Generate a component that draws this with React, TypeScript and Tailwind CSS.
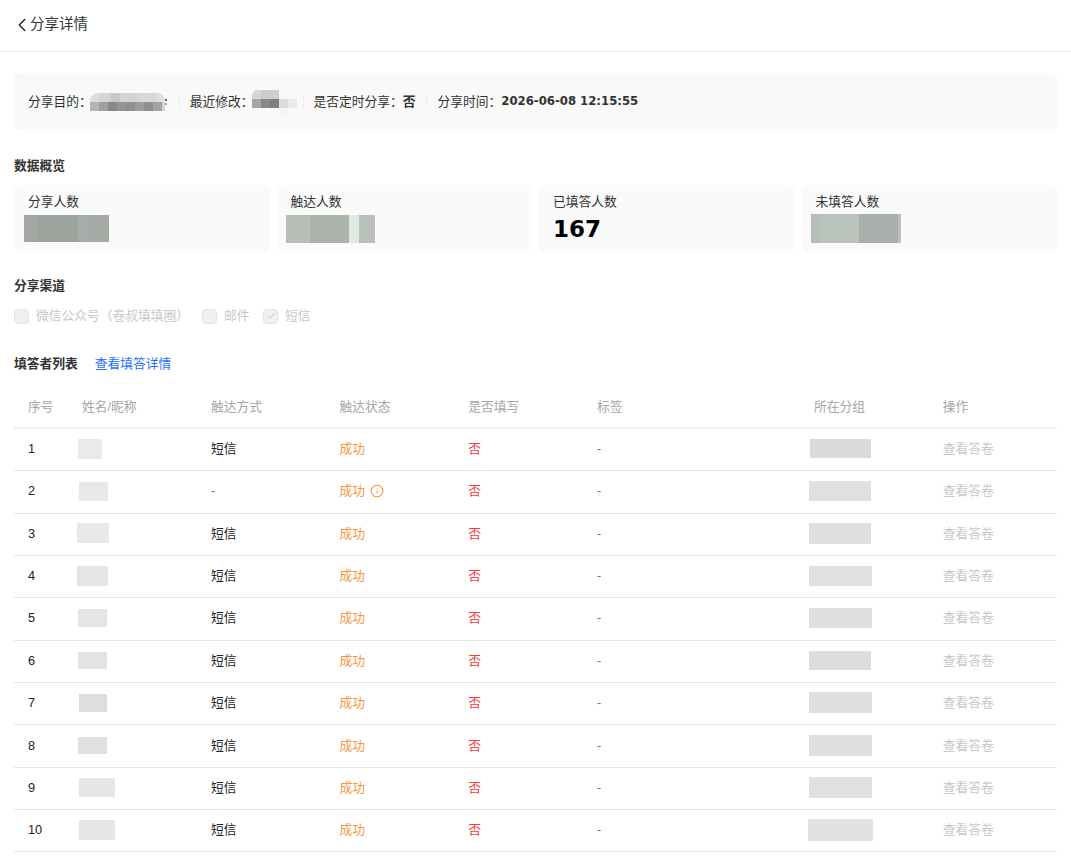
import { ChevronLeft, Check, Info } from "lucide-react";

const baseFont = "font-['Liberation_Sans','Noto_Sans_CJK_SC',sans-serif]";

type Row = {
  no: number;
  nameBlock: string;
  channel: string;
  groupBlock: string;
  info?: boolean;
};

const rows: Row[] = [
  { no: 1, nameBlock: "w-[24px] h-[20px] -ml-[4px] bg-[#eaeaea]", channel: "短信", groupBlock: "w-[61px] h-[19px] -ml-[4px] bg-[#dadada]" },
  { no: 2, nameBlock: "w-[29px] h-[19px] -ml-[3px] bg-[#e8e8e8]", channel: "-", groupBlock: "w-[62px] h-[20px] -ml-[5px] bg-[#dfe0df]", info: true },
  { no: 3, nameBlock: "w-[32px] h-[20px] -ml-[5px] bg-[#e8e9e8]", channel: "短信", groupBlock: "w-[62px] h-[21px] -ml-[5px] bg-[#dfdfdf]" },
  { no: 4, nameBlock: "w-[31px] h-[20px] -ml-[5px] bg-[#e5e5e5]", channel: "短信", groupBlock: "w-[63px] h-[20px] -ml-[5px] bg-[#e0e0de]" },
  { no: 5, nameBlock: "w-[29px] h-[18px] -ml-[4px] bg-[#e5e5e5]", channel: "短信", groupBlock: "w-[63px] h-[20px] -ml-[5px] bg-[#dfdfdf]" },
  { no: 6, nameBlock: "w-[29px] h-[17px] -ml-[4px] bg-[#e3e3e3]", channel: "短信", groupBlock: "w-[62px] h-[19px] -ml-[5px] bg-[#dddddd]" },
  { no: 7, nameBlock: "w-[28px] h-[18px] -ml-[3px] bg-[#dedede]", channel: "短信", groupBlock: "w-[63px] h-[21px] -ml-[5px] bg-[#dfdfdf]" },
  { no: 8, nameBlock: "w-[29px] h-[17px] -ml-[4px] bg-[#e0e0e0]", channel: "短信", groupBlock: "w-[63px] h-[21px] -ml-[5px] bg-[#dfdfdf]" },
  { no: 9, nameBlock: "w-[36px] h-[19px] -ml-[3px] bg-[#e6e6e6]", channel: "短信", groupBlock: "w-[63px] h-[21px] -ml-[5px] bg-[#e0e0e0]" },
  { no: 10, nameBlock: "w-[36px] h-[20px] -ml-[3px] bg-[#e6e6e6]", channel: "短信", groupBlock: "w-[65px] h-[22px] -ml-[6px] bg-[#e2e2e2]" },
];

function Mosaic({ cells, className }: { cells: string[]; className: string }) {
  return (
    <span className={`flex overflow-hidden ${className}`}>
      {cells.map((c, i) => (
        <span key={i} className={`h-full ${c}`} />
      ))}
    </span>
  );
}

function StatCard({ label, children }: { label: string; children: React.ReactNode }) {
  return (
    <div className="h-[67px] flex-1 rounded-[6px] bg-[#fafafa] pl-[14px] pt-[8px]">
      <div className="text-[12.75px] leading-[18px] text-[#333]">{label}</div>
      {children}
    </div>
  );
}

function Channel({ label, checked }: { label: string; checked?: boolean }) {
  return (
    <span className="flex items-center text-[#c8c8c8]">
      <span className="mr-[7px] flex h-[15px] w-[15px] items-center justify-center rounded-[4px] border border-[#e2e2e2] bg-[#f0f0f0]">
        {checked && <Check size={10} strokeWidth={1.6} className="text-[#aaa]" />}
      </span>
      {label}
    </span>
  );
}

const colClass = "grid grid-cols-[54px_129px_128.6px_128.6px_128.8px_217px_128.8px_1fr]";

export default function App() {
  return (
    <div className={`h-[856px] overflow-hidden bg-white text-[12.75px] text-[#333] ${baseFont}`}>
      <div className="flex h-[52px] items-center border-b border-[#ebebeb] pb-[1px] pl-[11px]">
        <ChevronLeft size={22} strokeWidth={1.5} className="text-[#222]" />
        <span className="-ml-[3px] text-[14.5px] text-[#333]">分享详情</span>
      </div>

      <div className="pl-[14px] pr-[14px]">
        <div className="mt-[21px] flex h-[58px] items-center rounded-[6px] bg-[#f9f9f9] pl-[14px]">
          <span>分享目的：</span>
          <span className="-ml-[2px] flex h-[18px] w-[78px] flex-col">
            <span className="flex">
              <Mosaic
                className="h-[9px] w-[75px] rounded-t-[8px]"
                cells={["w-[9px] bg-[#dcdcdc]", "w-[12px] bg-[#d5d5d5]", "w-[9px] bg-[#c6c7c8]", "w-[18px] bg-[#d4d4d4]", "w-[18px] bg-[#d8d8d8]", "w-[9px] bg-[#dedede]"]}
              />
              <span className="mt-[6px] h-[2px] w-[2px] bg-[#666]" />
            </span>
            <span className="flex">
              <Mosaic
                className="h-[9px] w-[75px]"
                cells={["w-[9px] bg-[#b4b4b2]", "w-[9px] bg-[#a0a09e]", "w-[9px] bg-[#87888b]", "w-[9px] bg-[#949492]", "w-[9px] bg-[#8f9093]", "w-[9px] bg-[#9d9d9e]", "w-[9px] bg-[#90908f]", "w-[9px] bg-[#a2a2a0]", "w-[3px] bg-[#d4d4d4]"]}
              />
              <span className="mt-[1px] h-[2px] w-[2px] bg-[#8fb0d0]" />
            </span>
          </span>
          <span className="ml-[11px] mr-[10px] h-[12px] w-px bg-[#ececec]" />
          <span>最近修改：</span>
          <span className="-ml-[2px] mt-[3px] flex h-[27px] w-[45px] flex-col">
            <Mosaic
              className="h-[9px] w-[27px] rounded-tl-[6px]"
              cells={["w-[9px] bg-[#d8d6d4]", "w-[9px] bg-[#cccccc]", "w-[9px] bg-[#cfcfcf]"]}
            />
            <Mosaic
              className="h-[9px] w-[45px]"
              cells={["w-[9px] bg-[#a9a5a2]", "w-[9px] bg-[#88888a]", "w-[9px] bg-[#7f8085]", "w-[9px] bg-[#dcdcdc]", "w-[9px] bg-[#e9ebeb]"]}
            />
            <span className="ml-[27px] h-[9px] w-[9px] bg-[#f4f4f4]" />
          </span>
          <span className="ml-[6px] mr-[10px] h-[12px] w-px bg-[#ececec]" />
          <span>是否定时分享：</span>
          <span className="font-bold">否</span>
          <span className="ml-[10px] mr-[11px] h-[12px] w-px bg-[#ececec]" />
          <span>分享时间：</span>
          <span className="font-['DejaVu_Sans',sans-serif] text-[11.7px] font-bold">2026-06-08 12:15:55</span>
        </div>

        <div className="mt-[26px] font-bold leading-[18px]">数据概览</div>
        <div className="mt-[10px] flex gap-[7px]">
          <StatCard label="分享人数">
            <Mosaic
              className="-ml-[4px] mt-[4px] h-[27px] w-[85px]"
              cells={["w-[15px] bg-[#a2a8a1]", "w-[39px] bg-[#9ca29c]", "w-[6px] bg-[#a3adad]", "w-[25px] bg-[#a6aca5]"]}
            />
          </StatCard>
          <StatCard label="触达人数">
            <Mosaic
              className="-ml-[5px] mt-[4px] h-[28px] w-[89px]"
              cells={["w-[24px] bg-[#b6beb6]", "w-[39px] bg-[#abb3ab]", "w-[10px] bg-[#dde9e3]", "w-[16px] bg-[#b8c0b8]"]}
            />
          </StatCard>
          <StatCard label="已填答人数">
            <div className="mt-[4px] font-['DejaVu_Sans',sans-serif] text-[23px] leading-[28px] font-bold text-black">167</div>
          </StatCard>
          <StatCard label="未填答人数">
            <Mosaic
              className="-ml-[5px] mt-[3px] h-[29px] w-[90px]"
              cells={["w-[9px] bg-[#b4beb7]", "w-[39px] bg-[#bac3bb]", "w-[39px] bg-[#a8aea9]", "w-[3px] bg-[#bac3bb]"]}
            />
          </StatCard>
        </div>

        <div className="mt-[25px] font-bold leading-[18px]">分享渠道</div>
        <div className="mt-[12px] flex h-[18px] items-center">
          <Channel label="微信公众号（卷叔填填圈）" />
          <span className="w-[13px]" />
          <Channel label="邮件" />
          <span className="w-[13.5px]" />
          <Channel label="短信" checked />
        </div>

        <div className="mt-[30px] flex items-center leading-[18px]">
          <span className="font-bold">填答者列表</span>
          <span className="ml-[17px] text-[#1f6fff]">查看填答详情</span>
        </div>

        <div className={`${colClass} mt-[14px] h-[42px] items-center border-b-2 border-[#f0f0f0] pl-[14px] text-[#a6a6a6]`}>
          <span>序号</span>
          <span>姓名/昵称</span>
          <span>触达方式</span>
          <span>触达状态</span>
          <span>是否填写</span>
          <span>标签</span>
          <span>所在分组</span>
          <span>操作</span>
        </div>
        {rows.map((r) => (
          <div key={r.no} className={`${colClass} h-[42.35px] items-center border-b border-[#e6e6e6] pb-[2px] pl-[14px]`}>
            <span className="text-[#222]">{r.no}</span>
            <span className={r.nameBlock} />
            <span className={r.channel === "-" ? "text-[#777]" : "text-[#222]"}>{r.channel}</span>
            <span className="flex items-center gap-[5px] text-[#f7963c]">
              成功
              {r.info && <Info size={14} strokeWidth={1.8} />}
            </span>
            <span className="text-[#f0403c]">否</span>
            <span className="text-[#777]">-</span>
            <span className={r.groupBlock} />
            <span className="text-[#c8c8c8]">查看答卷</span>
          </div>
        ))}
      </div>
    </div>
  );
}
